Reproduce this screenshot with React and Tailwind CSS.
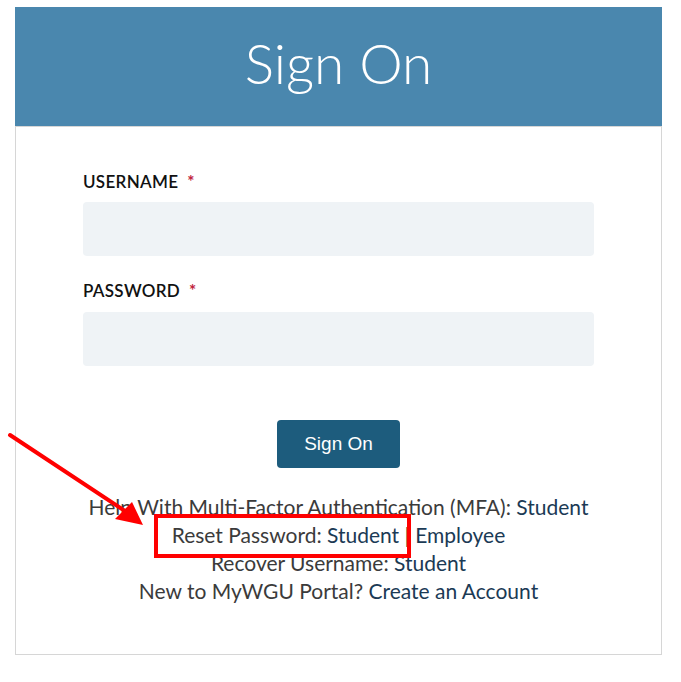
export default function App() {
  return (
    <div className="relative w-[681px] h-[682px] bg-white overflow-hidden">
      <div className="pt-[7px] pl-[15px]">
        <div className="w-[647px]">
          <div className="h-[119px] bg-[#4a87ae] flex items-center justify-center">
            <h1 className="text-white text-[55px] font-light leading-none font-['Lato',sans-serif] pb-[6px]">
              Sign On
            </h1>
          </div>
          <div className="h-[529px] border border-t-[1px] border-[#d6d6d6] px-[67px] pt-[43px] font-['Lato',sans-serif]">
            <label className="flex items-center h-[24px] text-[17px] font-semibold text-[#111] tracking-[0.3px]">
              USERNAME <span className="text-[#c0223b] ml-[9px] font-bold">*</span>
            </label>
            <div className="mt-[8px] h-[54px] rounded-[4px] bg-[#eff3f6]" />
            <label className="mt-[23px] flex items-center h-[24px] text-[17px] font-semibold text-[#111] tracking-[0.3px]">
              PASSWORD <span className="text-[#c0223b] ml-[9px] font-bold">*</span>
            </label>
            <div className="mt-[9px] h-[54px] rounded-[4px] bg-[#eff3f6]" />
            <div className="flex justify-center mt-[54px]">
              <button className="w-[123px] h-[48px] rounded-[4px] bg-[#1d5c7d] text-white text-[19px] font-['Liberation_Sans',sans-serif]">
                Sign On
              </button>
            </div>
            <div className="mt-[25px] text-center text-[21px] leading-[28px] text-[#3b3b3b] whitespace-nowrap">
              <p>
                Help With Multi-Factor Authentication (MFA): <a className="text-[#1b3a55]">Student</a>
              </p>
              <p>
                Reset Password: <a className="text-[#1b3a55]">Student</a> | <a className="text-[#1b3a55]">Employee</a>
              </p>
              <p>
                Recover Username: <a className="text-[#1b3a55]">Student</a>
              </p>
              <p>
                New to MyWGU Portal? <a className="text-[#1b3a55]">Create an Account</a>
              </p>
            </div>
          </div>
        </div>
      </div>

      {/* annotation overlay */}
      <div className="absolute left-[154px] top-[514px] w-[257px] h-[44px] border-[4px] border-[#ff0000]" />
      <svg className="absolute left-0 top-0" width="681" height="682" viewBox="0 0 681 682">
        <line x1="10" y1="435" x2="128" y2="513" stroke="#ff0000" strokeWidth="4" strokeLinecap="round" />
        <polygon points="143,525 115,519 132,502" fill="#ff0000" />
      </svg>
    </div>
  );
}
